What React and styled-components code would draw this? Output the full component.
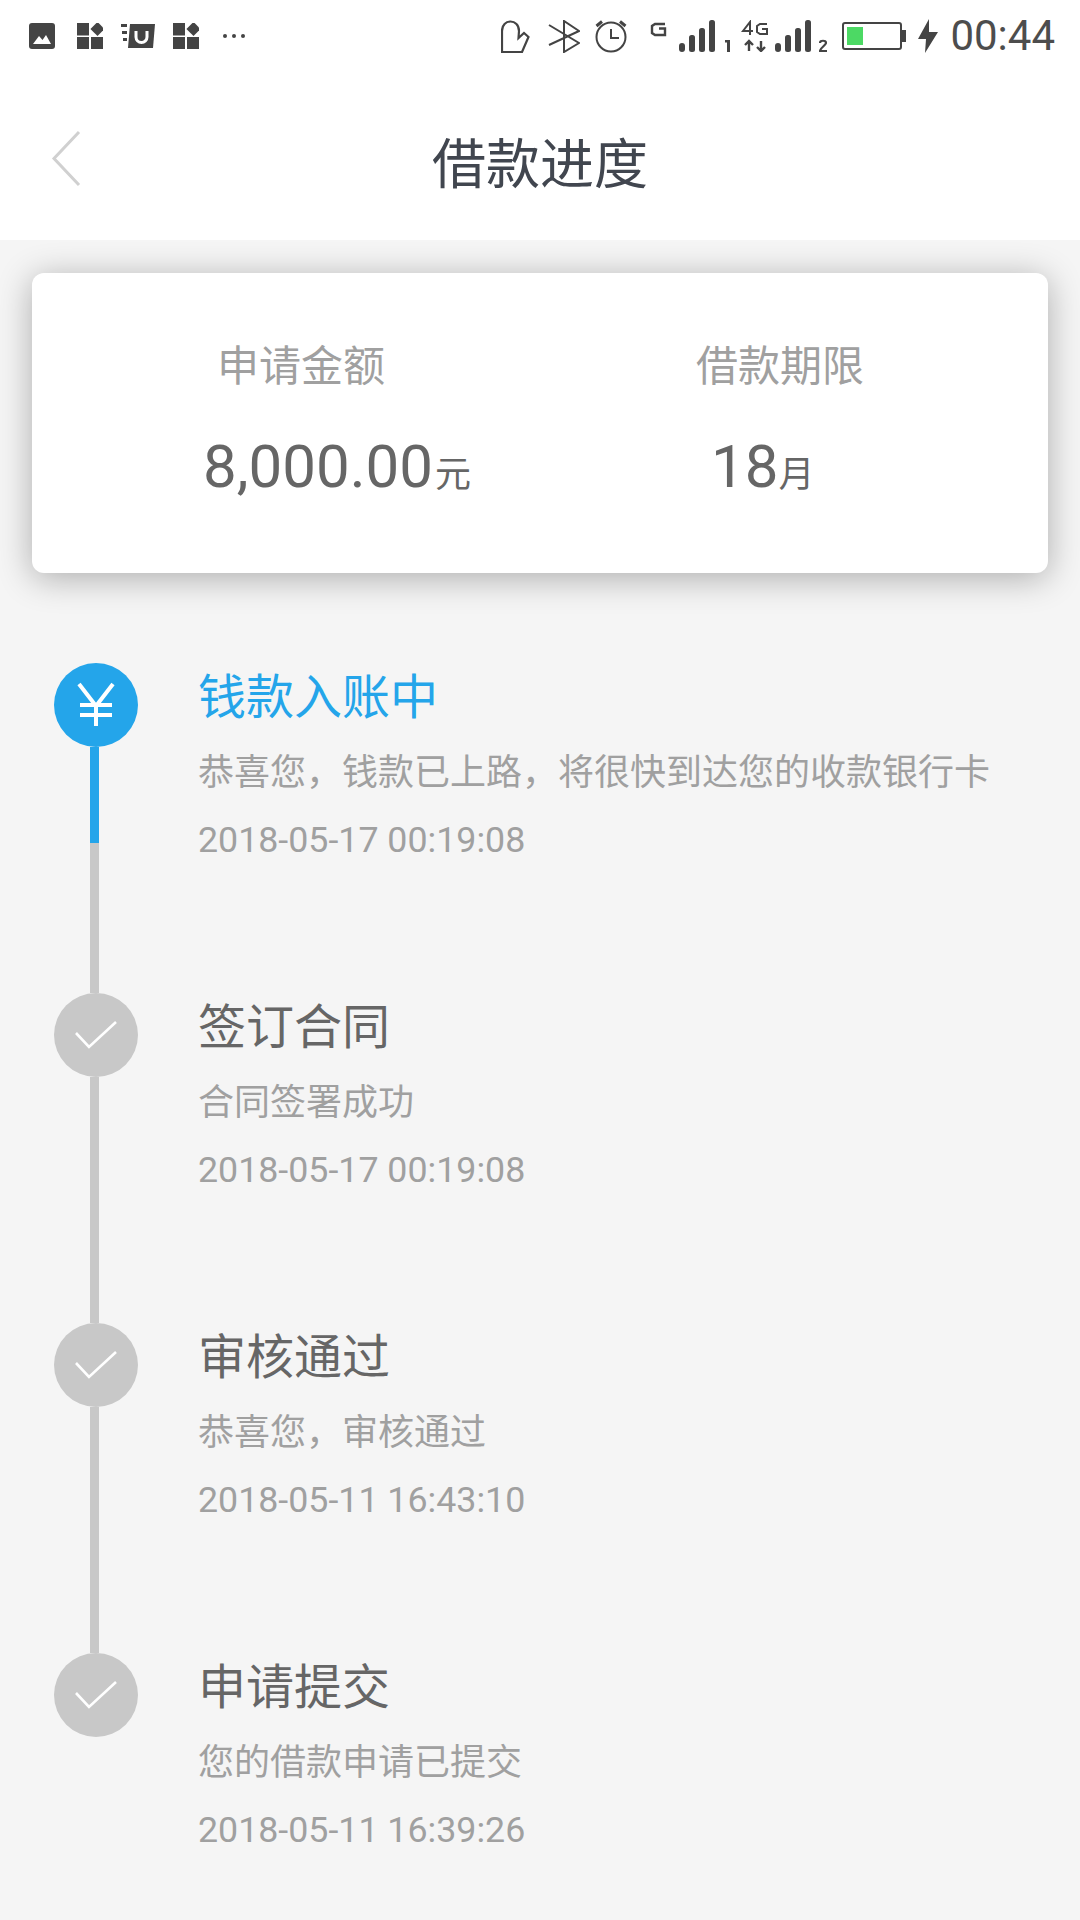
import React from 'react';
import styled, { createGlobalStyle } from 'styled-components';

const Global = createGlobalStyle`
  html, body { margin: 0; padding: 0; background: #f5f5f5; }
  * { box-sizing: border-box; }
`;

const Page = styled.div`
  width: 1080px;
  height: 1920px;
  overflow: hidden;
  background: #f5f5f5;
  font-family: Roboto, "Noto Sans CJK SC", sans-serif;
`;

const Header = styled.header`
  position: relative;
  z-index: 1;
  background: #fff;
  height: 240px;
`;

const StatusBar = styled.div`
  height: 72px;
  display: flex;
  justify-content: space-between;
  align-items: center;
  padding: 0 25px 0 29px;
  color: #444;
`;

const StatusGroup = styled.div`
  display: flex;
  align-items: center;
`;

const StatusIcon = styled.svg`
  display: block;
  flex: none;
  margin-left: ${props => props.$ml || 0}px;
`;

const Clock = styled.span`
  font-size: 42px;
  line-height: 72px;
  margin-left: 12px;
  color: #4d4d4d;
`;

const NavBar = styled.nav`
  height: 168px;
  display: flex;
  align-items: center;
  justify-content: center;
  position: relative;
`;

const BackIcon = styled.svg`
  position: absolute;
  left: 50px;
  top: 58px;
`;

const Title = styled.h1`
  margin: 0;
  font-size: 54px;
  font-weight: 400;
  color: #41464f;
  position: relative;
  top: 4px;
`;

const Card = styled.section`
  margin: 33px 32px 0;
  height: 300px;
  background: #fff;
  border-radius: 12px;
  box-shadow: 0 5px 34px rgba(0, 0, 0, 0.3);
  display: grid;
  grid-template-columns: 493px 1fr;
  padding: 64px 0 0 171px;
`;

const Label = styled.div`
  font-size: 42px;
  line-height: 60px;
  color: #a0a0a0;
  padding-left: ${props => props.$inset || 0}px;
`;

const Value = styled.div`
  margin-top: 32px;
  font-size: 60px;
  line-height: 76px;
  color: #666;
  padding-left: ${props => props.$inset || 0}px;
`;

const Unit = styled.span`
  font-size: 36px;
  margin-left: ${props => props.$gap}px;
`;

const Timeline = styled.div`
  margin-top: 90px;
  padding-left: 54px;
`;

const Step = styled.div`
  height: 330px;
  display: flex;
`;

const Marker = styled.div`
  width: 84px;
  flex: none;
  display: flex;
  flex-direction: column;
  align-items: center;
`;

const Dot = styled.div`
  width: 84px;
  height: 84px;
  flex: none;
  border-radius: 50%;
  background: ${props => (props.$active ? '#24a5ea' : '#c8c8c8')};
  display: flex;
  align-items: center;
  justify-content: center;
`;

const Line = styled.div`
  width: 9px;
  flex: 1;
  margin-left: -3px;
  background: #c8c8c8;
`;

const LineDone = styled.div`
  height: 96px;
  background: #24a5ea;
`;

const Body = styled.div`
  margin-left: 60px;
`;

const StepTitle = styled.div`
  margin-top: 5px;
  font-size: 48px;
  line-height: 60px;
  color: ${props => (props.$active ? '#24a5ea' : '#666')};
`;

const Desc = styled.div`
  margin-top: 23px;
  font-size: 36px;
  line-height: 44px;
  color: #a0a0a0;
`;

const DateText = styled.div`
  margin-top: 23px;
  font-size: 35.75px;
  line-height: 44px;
  color: #a0a0a0;
`;

const Squares = ({ ml }) => (
  <StatusIcon $ml={ml} width="26" height="26" viewBox="0 0 26 26" fill="#444">
    <rect x="0" y="0" width="12" height="12.5" />
    <rect x="0" y="14" width="12" height="12" />
    <rect x="14" y="14" width="12" height="12" />
    <rect x="15.5" y="1" width="10" height="10" transform="rotate(45 20.5 6)" />
  </StatusIcon>
);

const Signal = ({ ml }) => (
  <StatusIcon $ml={ml} width="36" height="32" viewBox="0 0 36 32" fill="#444">
    <rect x="0" y="23" width="6" height="9" rx="3" />
    <rect x="10" y="15" width="6" height="17" rx="2.5" />
    <rect x="20" y="8" width="6" height="24" rx="2.5" />
    <rect x="30" y="0" width="6" height="32" rx="2.5" />
  </StatusIcon>
);

const Check = () => (
  <svg width="44" height="32" viewBox="0 0 44 32" fill="none" stroke="#fff" strokeWidth="2.6">
    <path d="M2 14L15 28L42 3" />
  </svg>
);

const Yen = () => (
  <svg width="40" height="46" viewBox="0 0 40 46" fill="none" stroke="#fff" strokeWidth="4">
    <path d="M3 2L20 24L37 2" />
    <path d="M20 24V44" />
    <path d="M4 23H36" />
    <path d="M4 33H36" />
  </svg>
);

const steps = [
  { title: '钱款入账中', desc: '恭喜您，钱款已上路，将很快到达您的收款银行卡', date: '2018-05-17 00:19:08', active: true },
  { title: '签订合同', desc: '合同签署成功', date: '2018-05-17 00:19:08' },
  { title: '审核通过', desc: '恭喜您，审核通过', date: '2018-05-11 16:43:10' },
  { title: '申请提交', desc: '您的借款申请已提交', date: '2018-05-11 16:39:26' },
];

export default function App() {
  return (
    <Page>
      <Global />
      <Header>
        <StatusBar>
          <StatusGroup>
            <StatusIcon width="26" height="26" viewBox="0 0 26 26">
              <rect width="26" height="26" rx="3" fill="#444" />
              <path d="M4 21L10 13L13.5 17L17 12L22 21Z" fill="#fff" />
            </StatusIcon>
            <Squares ml={22} />
            <StatusIcon $ml={18} width="34" height="26" viewBox="0 0 34 26" fill="#444">
              <rect x="0" y="1" width="6" height="3" />
              <rect x="1" y="8" width="5" height="3" />
              <rect x="2" y="15" width="4" height="3" />
              <path d="M9 1H34L32 25H7Z" />
              <path d="M15 8V14A5.5 5.5 0 0 0 26 14V8" fill="none" stroke="#fff" strokeWidth="3" />
            </StatusIcon>
            <Squares ml={18} />
            <StatusIcon $ml={23} width="24" height="6" viewBox="0 0 24 6" fill="#444">
              <circle cx="3" cy="3" r="2" />
              <circle cx="12" cy="3" r="2" />
              <circle cx="21" cy="3" r="2" />
            </StatusIcon>
          </StatusGroup>
          <StatusGroup>
            <StatusIcon width="29" height="33" viewBox="0 0 29 33" fill="none" stroke="#444" strokeWidth="2.2">
              <path d="M1 32V11C1 5 5 1.5 9.5 1.5C14 1.5 18 5 18 11L17.5 18L23 13L27.5 17L21 32Z" />
            </StatusIcon>
            <StatusIcon $ml={18} width="32" height="33" viewBox="0 0 32 33" fill="none" stroke="#444" strokeWidth="2">
              <path d="M1 5L31 23L16 32V1L31 11L1 25" />
            </StatusIcon>
            <StatusIcon $ml={15} width="32" height="33" viewBox="0 0 32 33" fill="none" stroke="#444" strokeWidth="2">
              <circle cx="16" cy="17" r="14.5" />
              <path d="M16 9V18H24" />
              <path d="M1.5 6L7 1.5M30.5 6L25 1.5" strokeWidth="3" />
            </StatusIcon>
            <StatusIcon $ml={23} width="17" height="32" viewBox="0 0 17 32" fill="none" stroke="#444" strokeWidth="2.4">
              <path d="M15 4H5L2 6V13L5 15H15V8.5H9" />
            </StatusIcon>
            <Signal ml={12} />
            <StatusIcon $ml={9} width="8" height="32" viewBox="0 0 8 32" fill="#444">
              <rect x="3" y="20" width="3" height="12" />
              <rect x="1" y="20" width="4" height="2.5" />
            </StatusIcon>
            <StatusIcon $ml={9} width="28" height="32" viewBox="0 0 28 32" fill="none" stroke="#444" strokeWidth="2">
              <path d="M9 15V2L2 11H12" />
              <path d="M26 4H19L16 6V12L19 14H26V9H21" />
              <path d="M8 31V22M4 25L8 21L12 25M20 21V30M16 27L20 31L24 27" strokeWidth="2.4" />
            </StatusIcon>
            <Signal ml={6} />
            <StatusIcon $ml={8} width="8" height="32" viewBox="0 0 8 32" fill="none" stroke="#444" strokeWidth="2.2">
              <path d="M1 23C1 20 7 20 7 23C7 25 1 28 1 31H8" />
            </StatusIcon>
            <StatusIcon $ml={15} width="64" height="28" viewBox="0 0 64 28">
              <rect x="1" y="1" width="58" height="26" rx="2" fill="#fff" stroke="#444" strokeWidth="2" />
              <rect x="5" y="5" width="16" height="18" fill="#4cd964" />
              <rect x="60" y="8" width="4" height="12" fill="#444" />
            </StatusIcon>
            <StatusIcon $ml={12} width="20" height="34" viewBox="0 0 20 34" fill="#444">
              <path d="M11 0L0 20H8L7 34L20 13H11Z" />
            </StatusIcon>
            <Clock>00:44</Clock>
          </StatusGroup>
        </StatusBar>
        <NavBar>
          <BackIcon width="32" height="58" viewBox="0 0 32 58" fill="none" stroke="#d0d0d0" strokeWidth="3">
            <path d="M29 2L4 28.5L29 55" />
          </BackIcon>
          <Title>借款进度</Title>
        </NavBar>
      </Header>

      <Card>
        <div>
          <Label $inset={14}>申请金额</Label>
          <Value>8,000.00<Unit $gap={2}>元</Unit></Value>
        </div>
        <div>
          <Label>借款期限</Label>
          <Value $inset={15}>18<Unit $gap={0}>月</Unit></Value>
        </div>
      </Card>

      <Timeline>
        {steps.map((step, i) => (
          <Step key={step.title}>
            <Marker>
              <Dot $active={step.active}>{step.active ? <Yen /> : <Check />}</Dot>
              {i < steps.length - 1 && (
                <Line>{step.active && <LineDone />}</Line>
              )}
            </Marker>
            <Body>
              <StepTitle $active={step.active}>{step.title}</StepTitle>
              <Desc>{step.desc}</Desc>
              <DateText>{step.date}</DateText>
            </Body>
          </Step>
        ))}
      </Timeline>
    </Page>
  );
}
